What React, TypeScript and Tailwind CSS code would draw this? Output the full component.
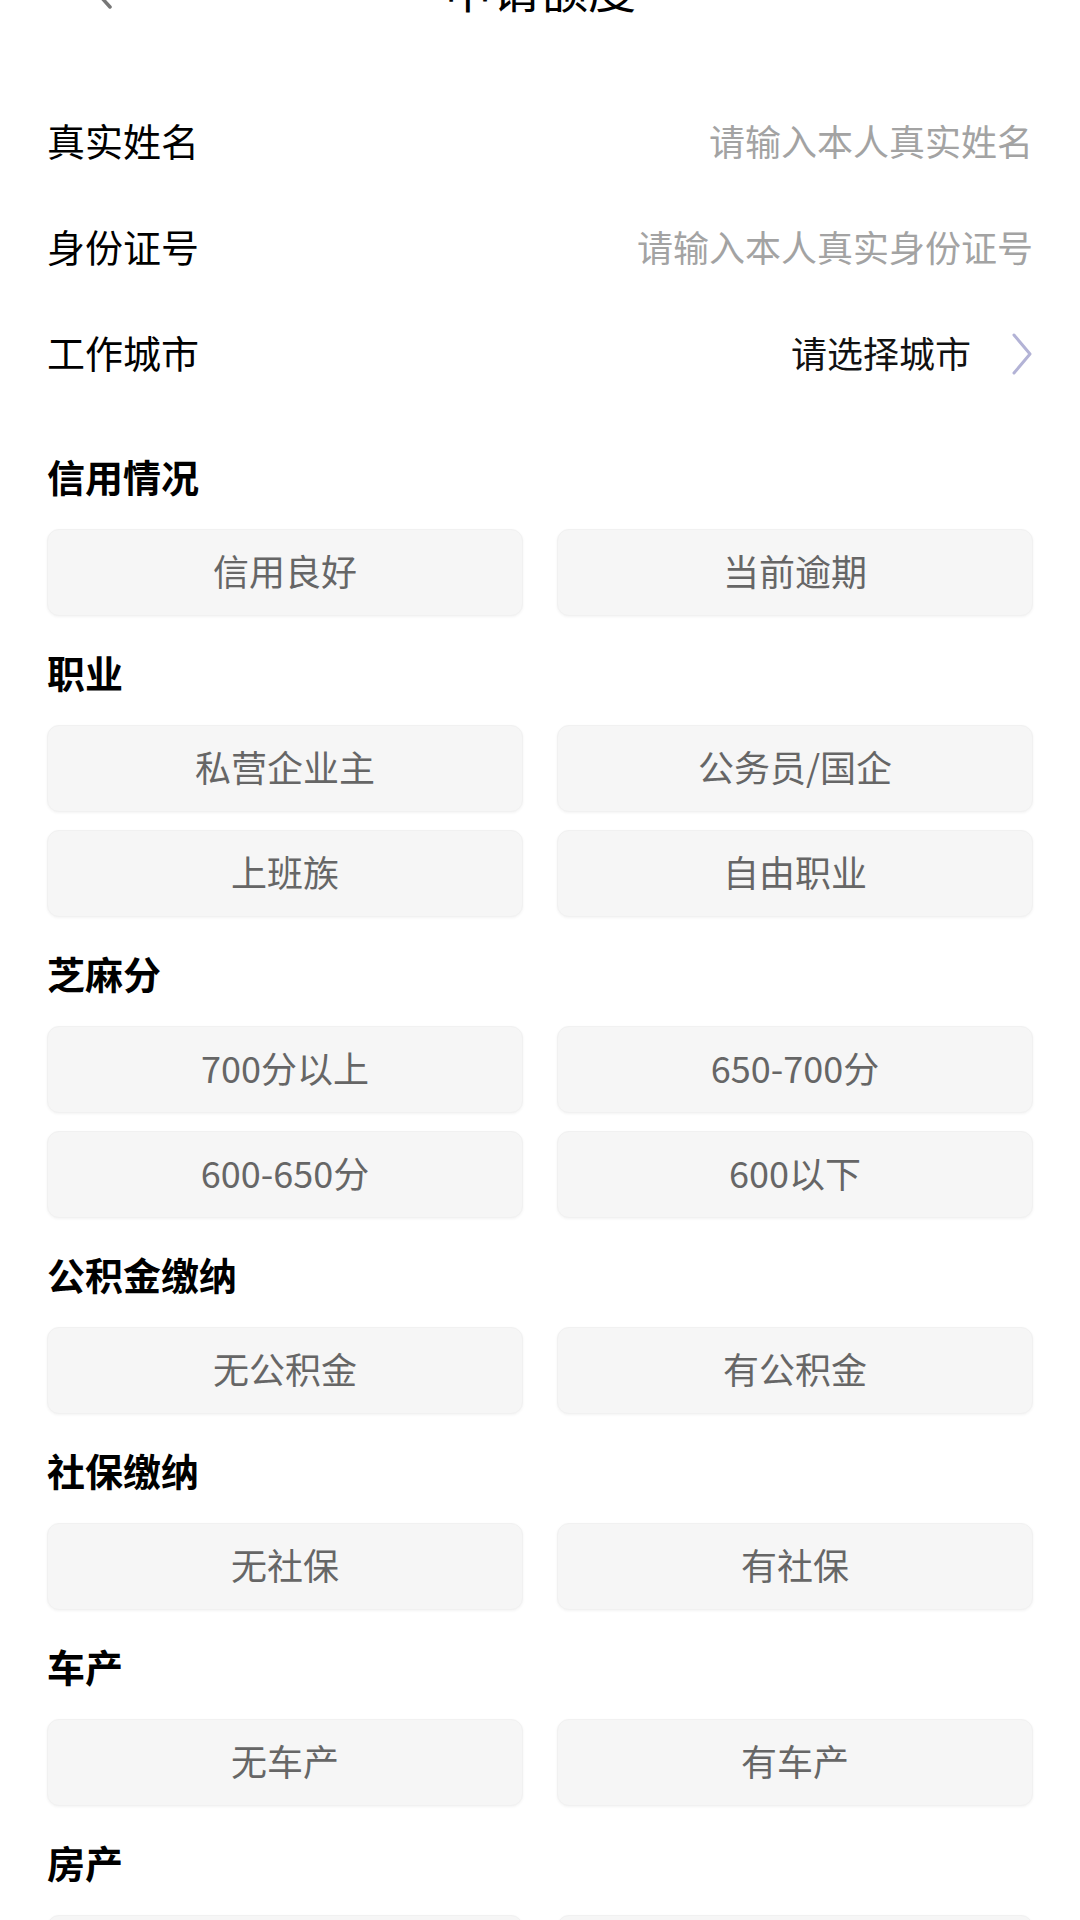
import React from "react";

const fields = [
  { label: "真实姓名", placeholder: "请输入本人真实姓名" },
  { label: "身份证号", placeholder: "请输入本人真实身份证号" },
];

const sections: { title: string; options: string[] }[] = [
  { title: "信用情况", options: ["信用良好", "当前逾期"] },
  { title: "职业", options: ["私营企业主", "公务员/国企", "上班族", "自由职业"] },
  { title: "芝麻分", options: ["700分以上", "650-700分", "600-650分", "600以下"] },
  { title: "公积金缴纳", options: ["无公积金", "有公积金"] },
  { title: "社保缴纳", options: ["无社保", "有社保"] },
  { title: "车产", options: ["无车产", "有车产"] },
  { title: "房产", options: ["无房产", "有房产"] },
];

const App: React.FC = () => {
  return (
    <div
      className="w-[1080px] h-[1920px] overflow-hidden bg-white"
      style={{ fontFamily: '"Noto Sans CJK SC", "Noto Sans", sans-serif' }}
    >
      {/* header, partly scrolled out of view */}
      <div className="relative h-[100px] -mt-[61px] pb-[4px] flex items-center justify-center">
        <svg
          className="absolute left-[84px] top-[24px]"
          width="34"
          height="48"
          viewBox="0 0 34 48"
          fill="none"
        >
          <polyline points="26,4 8,24 26,44" stroke="#777" strokeWidth="3.5" strokeLinecap="round" strokeLinejoin="round" />
        </svg>
        <span className="text-[48px] leading-none text-black">申请额度</span>
      </div>

      <div className="pt-[51px] px-[47px]">
        {fields.map((f) => (
          <div key={f.label} className="h-[106px] pb-[6px] flex items-center justify-between">
            <span className="text-[38px] leading-none text-black">{f.label}</span>
            <span className="text-[36px] leading-none text-[#a3a3a3]">{f.placeholder}</span>
          </div>
        ))}
        <div className="h-[106px] pb-[6px] flex items-center justify-between">
          <span className="text-[38px] leading-none text-black">工作城市</span>
          <div className="flex items-center gap-[38px]">
            <span className="text-[36px] leading-none text-[#111]">请选择城市</span>
            <svg width="26" height="44" viewBox="0 0 26 44" fill="none" className="-mr-[2px] mt-[4px]">
              <polyline points="5,3 21,22 5,41" stroke="#b3b3d6" strokeWidth="3" strokeLinecap="round" strokeLinejoin="round" />
            </svg>
          </div>
        </div>

        <div className="mt-[45px] flex flex-col gap-[33px]">
          {sections.map((s) => (
            <div key={s.title}>
              <div className="h-[50px] pb-[5px] flex items-center">
                <span className="text-[38px] leading-none font-bold text-black">{s.title}</span>
              </div>
              <div className="mt-[26px] grid grid-cols-2 gap-x-[34px] gap-y-[18px]">
                {s.options.map((o) => (
                  <div
                    key={o}
                    className="h-[87px] pb-[6px] rounded-[12px] bg-[#f6f6f6] border border-[#f1f1f1] shadow-[0_1px_3px_rgba(0,0,0,0.05)] flex items-center justify-center"
                  >
                    <span className="text-[36px] leading-none text-[#666]">{o}</span>
                  </div>
                ))}
              </div>
            </div>
          ))}
        </div>
      </div>
    </div>
  );
};

export default App;
